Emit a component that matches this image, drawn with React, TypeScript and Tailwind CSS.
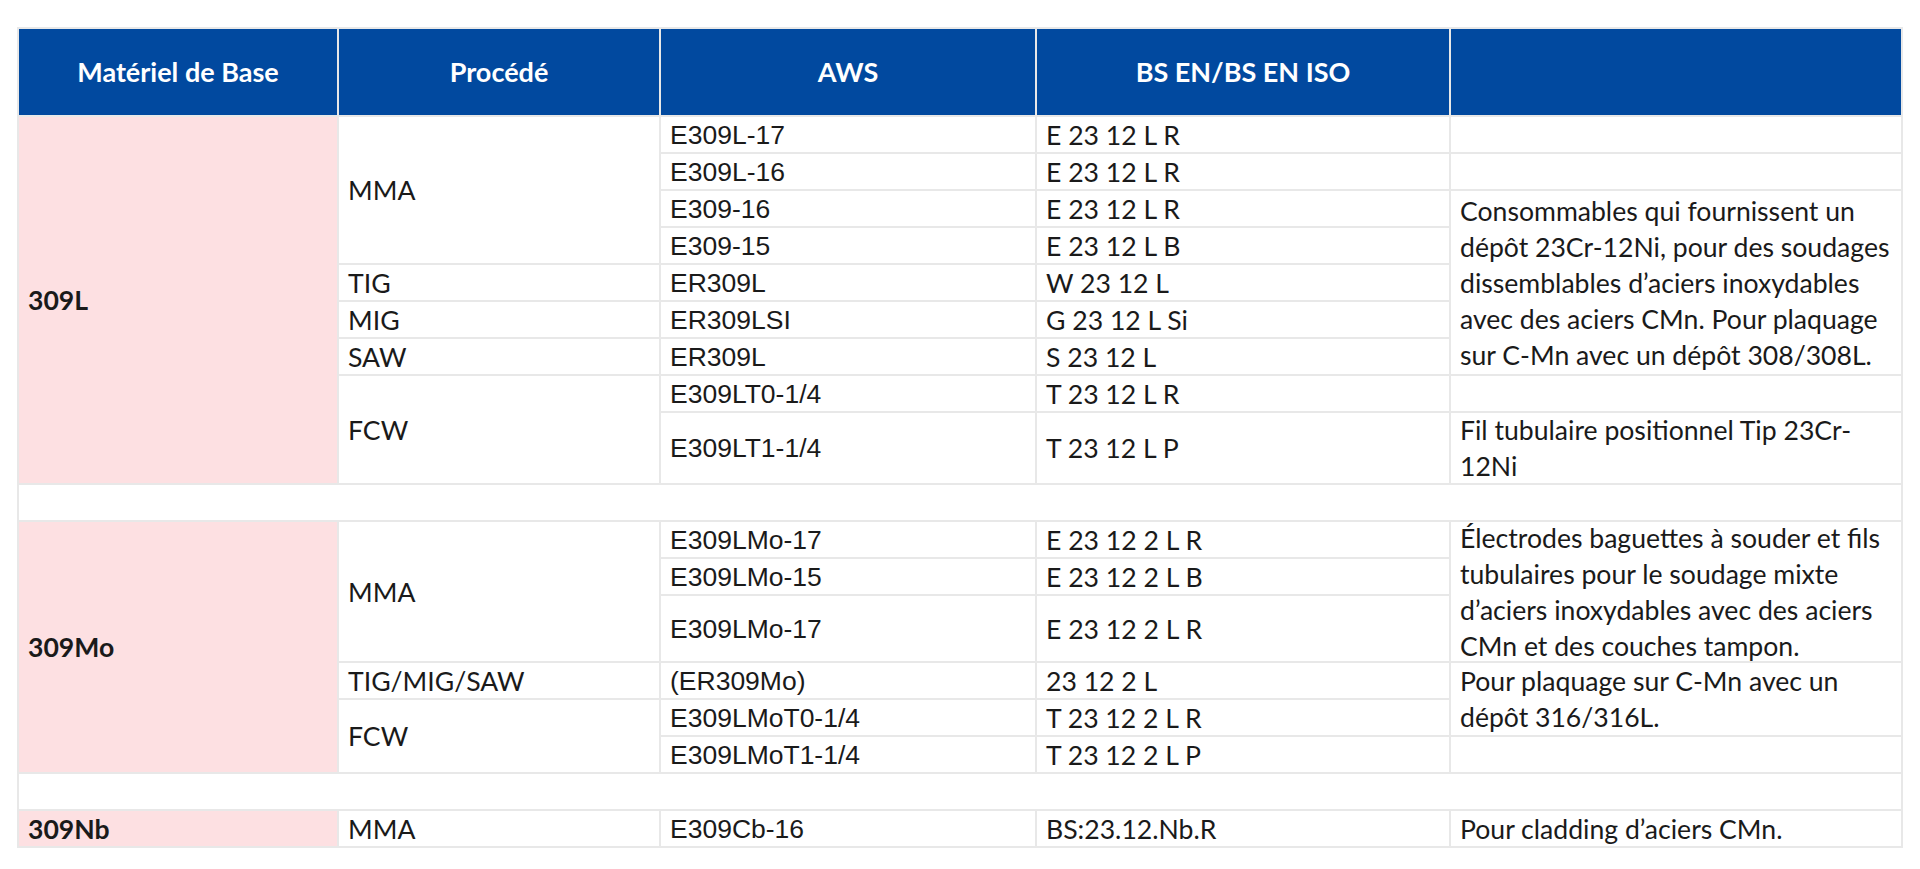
import type { ReactNode } from "react";

// cellule de base : texte centré verticalement, marge gauche de 9px
const Cell = ({
  children,
  className = "",
  bg = "bg-white",
}: {
  children?: ReactNode;
  className?: string;
  bg?: string;
}) => (
  <div className={`flex items-center pl-[9px] whitespace-nowrap ${bg} ${className}`}>
    {children}
  </div>
);

const Head = ({ children }: { children?: ReactNode }) => (
  <div className="flex items-center justify-center bg-[#01499f] text-[27px] font-bold text-white">
    {children}
  </div>
);

const Base = ({ children, className = "" }: { children: ReactNode; className?: string }) => (
  <Cell bg="bg-[#fde0e2]" className={`font-bold ${className}`}>
    {children}
  </Cell>
);

const Aws = ({ children }: { children: ReactNode }) => (
  <Cell className="font-['Liberation_Sans',Arial,sans-serif] text-[26.5px]">{children}</Cell>
);

const Spacer = () => <div className="col-span-5 bg-white" />;

export default function App() {
  return (
    <div className="min-h-screen bg-white pt-[27px]">
      <div className="mx-[17px] grid grid-cols-[318px_320px_374px_412px_1fr] grid-rows-[86px_repeat(8,35px)_70px_repeat(3,35px)_65px_repeat(5,35px)] gap-[2px] bg-[#e8e8e8] p-[2px] font-['Lato',sans-serif] text-[26.6px] leading-[36px] text-[#1a1a1a]">
        {/* EN-TÊTE */}
        <Head>Matériel de Base</Head>
        <Head>Procédé</Head>
        <Head>AWS</Head>
        <Head>BS EN/BS EN ISO</Head>
        <Head />

        {/* 309L */}
        <Base className="row-span-9">309L</Base>
        <Cell className="row-span-4">MMA</Cell>
        <Aws>E309L-17</Aws>
        <Cell>E 23 12 L R</Cell>
        <Cell />

        <Aws>E309L-16</Aws>
        <Cell>E 23 12 L R</Cell>
        <Cell />

        <Aws>E309-16</Aws>
        <Cell>E 23 12 L R</Cell>
        <Cell className="row-span-5">
          <span>
            Consommables qui fournissent un
            <br />
            dépôt 23Cr-12Ni, pour des soudages
            <br />
            dissemblables d’aciers inoxydables
            <br />
            avec des aciers CMn. Pour plaquage
            <br />
            sur C-Mn avec un dépôt 308/308L.
          </span>
        </Cell>

        <Aws>E309-15</Aws>
        <Cell>E 23 12 L B</Cell>

        <Cell>TIG</Cell>
        <Aws>ER309L</Aws>
        <Cell>W 23 12 L</Cell>

        <Cell>MIG</Cell>
        <Aws>ER309LSI</Aws>
        <Cell>G 23 12 L Si</Cell>

        <Cell>SAW</Cell>
        <Aws>ER309L</Aws>
        <Cell>S 23 12 L</Cell>

        <Cell className="row-span-2">FCW</Cell>
        <Aws>E309LT0-1/4</Aws>
        <Cell>T 23 12 L R</Cell>
        <Cell />

        <Aws>E309LT1-1/4</Aws>
        <Cell>T 23 12 L P</Cell>
        <Cell>
          <span>
            Fil tubulaire positionnel Tip 23Cr-
            <br />
            12Ni
          </span>
        </Cell>

        <Spacer />

        {/* 309Mo */}
        <Base className="row-span-6">309Mo</Base>
        <Cell className="row-span-3">MMA</Cell>
        <Aws>E309LMo-17</Aws>
        <Cell>E 23 12 2 L R</Cell>
        <Cell className="row-span-3">
          <span>
            Électrodes baguettes à souder et fils
            <br />
            tubulaires pour le soudage mixte
            <br />
            d’aciers inoxydables avec des aciers
            <br />
            CMn et des couches tampon.
          </span>
        </Cell>

        <Aws>E309LMo-15</Aws>
        <Cell>E 23 12 2 L B</Cell>

        <Aws>E309LMo-17</Aws>
        <Cell>E 23 12 2 L R</Cell>

        <Cell>TIG/MIG/SAW</Cell>
        <Aws>(ER309Mo)</Aws>
        <Cell>23 12 2 L</Cell>
        <Cell className="row-span-2">
          <span>
            Pour plaquage sur C-Mn avec un
            <br />
            dépôt 316/316L.
          </span>
        </Cell>

        <Cell className="row-span-2">FCW</Cell>
        <Aws>E309LMoT0-1/4</Aws>
        <Cell>T 23 12 2 L R</Cell>

        <Aws>E309LMoT1-1/4</Aws>
        <Cell>T 23 12 2 L P</Cell>
        <Cell />

        <Spacer />

        {/* 309Nb */}
        <Base>309Nb</Base>
        <Cell>MMA</Cell>
        <Aws>E309Cb-16</Aws>
        <Cell>BS:23.12.Nb.R</Cell>
        <Cell>Pour cladding d’aciers CMn.</Cell>
      </div>
    </div>
  );
}
